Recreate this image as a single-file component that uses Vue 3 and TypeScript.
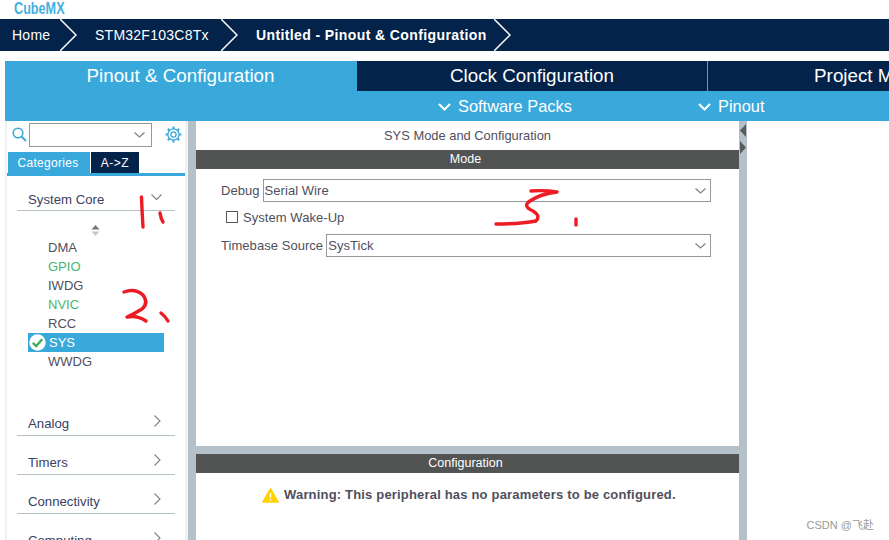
<script setup lang="ts">
const crumbs = [
  { label: 'Home', width: 61, bold: false },
  { label: 'STM32F103C8Tx', width: 161, bold: false },
  { label: 'Untitled - Pinout & Configuration', width: 273, bold: true },
]
const tabs = [
  { label: 'Pinout & Configuration', active: true },
  { label: 'Clock Configuration', active: false },
  { label: 'Project Manager', active: false },
]
const items = [
  { label: 'DMA', state: '' },
  { label: 'GPIO', state: 'green' },
  { label: 'IWDG', state: '' },
  { label: 'NVIC', state: 'green' },
  { label: 'RCC', state: '' },
  { label: 'SYS', state: 'selected' },
  { label: 'WWDG', state: '' },
]
const closed = ['Analog', 'Timers', 'Connectivity', 'Computing']
</script>

<template>
  <div class="app">
    <div class="logo"><div class="logo-text">CubeMX</div></div>

    <nav class="crumbs">
      <div v-for="c in crumbs" :key="c.label" class="crumb" :class="{ bold: c.bold }" :style="{ width: c.width + 'px' }">
        <span>{{ c.label }}</span>
        <svg class="crumb-arrow" width="17" height="32" viewBox="0 0 17 32"><path d="M0 0 L16 16 L0 32" fill="none" stroke="#fff" stroke-width="1.5" /></svg>
      </div>
    </nav>

    <div class="tabs-wrap">
      <div class="tabs">
        <div v-for="t in tabs" :key="t.label" class="tab" :class="{ active: t.active }">{{ t.label }}</div>
      </div>
      <div class="subbar">
        <div class="sub sub-soft">
          <svg width="13" height="8" viewBox="0 0 13 8"><path d="M1 1 L6.5 6.5 L12 1" fill="none" stroke="#fff" stroke-width="2" /></svg>
          <span>Software Packs</span>
        </div>
        <div class="sub sub-pin">
          <svg width="13" height="8" viewBox="0 0 13 8"><path d="M1 1 L6.5 6.5 L12 1" fill="none" stroke="#fff" stroke-width="2" /></svg>
          <span>Pinout</span>
        </div>
      </div>
    </div>

    <main class="main">
      <aside class="left">
        <div class="search">
          <svg class="mag" width="15" height="15" viewBox="0 0 15 15"><circle cx="6" cy="6" r="4.8" fill="none" stroke="#39a9dc" stroke-width="1.6" /><path d="M9.5 9.5 L14 14" stroke="#39a9dc" stroke-width="2" /></svg>
          <div class="combo">
            <svg width="11" height="6" viewBox="0 0 11 6"><path d="M0.5 0.5 L5.5 5 L10.5 0.5" fill="none" stroke="#7d8286" stroke-width="1.2" /></svg>
          </div>
          <svg class="gear" width="17" height="17" viewBox="0 0 17 17">
            <circle cx="8.5" cy="8.5" r="5.6" fill="none" stroke="#39a9dc" stroke-width="1.3" />
            <circle cx="8.5" cy="8.5" r="2.6" fill="none" stroke="#39a9dc" stroke-width="1.3" />
            <path d="M8.5 0.5V3M8.5 14V16.5M0.5 8.5H3M14 8.5H16.5M2.8 2.8L4.6 4.6M12.4 12.4L14.2 14.2M14.2 2.8L12.4 4.6M4.6 12.4L2.8 14.2" stroke="#39a9dc" stroke-width="2" />
          </svg>
        </div>
        <div class="cat-tabs">
          <div class="cat active">Categories</div>
          <div class="cat az">A-&gt;Z</div>
        </div>
        <div class="tree">
          <div class="group open">
            <span>System Core</span>
            <svg class="chev" width="11" height="6" viewBox="0 0 11 6"><path d="M0.5 0.5 L5.5 5.5 L10.5 0.5" fill="none" stroke="#7d8286" stroke-width="1.1" /></svg>
          </div>
          <div class="sorter">
            <svg width="9" height="11" viewBox="0 0 9 11"><path d="M4.5 0 L8.5 4.5 H0.5 Z" fill="#73787b" /><path d="M4.5 11 L8.5 6.5 H0.5 Z" fill="#c4c8ca" /></svg>
          </div>
          <ul class="list">
            <li v-for="i in items" :key="i.label" :class="i.state">
              <svg v-if="i.state === 'selected'" class="ok" width="17" height="17" viewBox="0 0 17 17"><circle cx="8.5" cy="8.5" r="8.2" fill="#fff" /><path d="M3.8 8.8 L7.2 12 L13.2 5.2" fill="none" stroke="#3fae5a" stroke-width="2.4" /></svg>
              <span>{{ i.label }}</span>
            </li>
          </ul>
          <div v-for="g in closed" :key="g" class="group">
            <span>{{ g }}</span>
            <svg class="chev side" width="7" height="12" viewBox="0 0 7 12"><path d="M0.5 0.5 L6 6 L0.5 11.5" fill="none" stroke="#7d8286" stroke-width="1.1" /></svg>
          </div>
        </div>
      </aside>

      <div class="split"></div>

      <section class="center">
        <div class="mode-panel">
          <div class="title">SYS Mode and Configuration</div>
          <div class="bar">Mode</div>
          <div class="form">
            <div class="field">
              <label>Debug</label>
              <div class="select">
                <span>Serial Wire</span>
                <svg width="11" height="6" viewBox="0 0 11 6"><path d="M0.5 0.5 L5.5 5 L10.5 0.5" fill="none" stroke="#7d8286" stroke-width="1.2" /></svg>
              </div>
            </div>
            <div class="check"><i class="box"></i><span>System Wake-Up</span></div>
            <div class="field">
              <label>Timebase Source</label>
              <div class="select">
                <span>SysTick</span>
                <svg width="11" height="6" viewBox="0 0 11 6"><path d="M0.5 0.5 L5.5 5 L10.5 0.5" fill="none" stroke="#7d8286" stroke-width="1.2" /></svg>
              </div>
            </div>
          </div>
        </div>
        <div class="config-panel">
          <div class="bar">Configuration</div>
          <div class="warning">
            <svg width="17" height="15" viewBox="0 0 17 15"><path d="M8.5 1 L16 14 H1 Z" fill="#ffd200" stroke="#ffd200" stroke-width="1.6" stroke-linejoin="round" /><path d="M8.5 5V9.5M8.5 11V12.6" stroke="#fff" stroke-width="1.5" /></svg>
            <strong>Warning: This peripheral has no parameters to be configured.</strong>
          </div>
        </div>
      </section>

      <div class="split arrows">
        <svg width="8" height="13" viewBox="0 0 8 13"><path d="M7 0 V13 L1 6.5 Z" fill="#5a5c5c" /></svg>
        <svg width="8" height="13" viewBox="0 0 8 13"><path d="M1 0 V13 L7 6.5 Z" fill="#5a5c5c" /></svg>
      </div>

      <div class="right"></div>
    </main>

    <svg class="ink" width="889" height="540" viewBox="0 0 889 540">
      <g fill="none" stroke="#ed1c24" stroke-width="3.4" stroke-linecap="round" stroke-linejoin="round">
        <path d="M141.5 197 Q142 212 143 227" />
        <path d="M160 213 Q161 219 163 222" />
        <path d="M124 292 Q135 288 143 295 Q149 303 142 309 Q134 314 127 317 Q137 315 146 321" />
        <path d="M161 313 Q165 316 168 321" />
        <path d="M531 191 Q545 190 557 192 Q540 194 530 201 Q522 206 533 211 Q541 216 536 221 Q520 224 496 224" />
        <path d="M576 219 V225" />
      </g>
    </svg>
    <div class="watermark">CSDN @飞赴</div>
  </div>
</template>

<style>
html, body { margin: 0; padding: 0; background: #fff; overflow: hidden; }
</style>

<style scoped>
.app {
  position: relative;
  width: 889px;
  height: 540px;
  overflow: hidden;
  background: #fff;
  font-family: "Liberation Sans", Arial, sans-serif;
  color: #4f4f5c;
}
.logo {
  height: 19px;
  padding-left: 14px;
  overflow: hidden;
}
.logo-text {
  font-size: 16px;
  font-weight: 700;
  line-height: 15px;
  color: #45afe0;
  transform: scaleX(0.79);
  transform-origin: 0 0;
  padding-top: 1px;
}
.crumbs {
  display: flex;
  height: 32px;
  background: #03234b;
  color: #fff;
  font-size: 14px;
  letter-spacing: 0.25px;
}
.crumb {
  position: relative;
  flex: none;
  box-sizing: border-box;
  line-height: 32px;
  white-space: nowrap;
}
.crumb span { display: block; }
.crumb:nth-child(1) { padding-left: 12px; }
.crumb:nth-child(2) { padding-left: 34px; }
.crumb:nth-child(3) { padding-left: 34px; }
.crumb.bold { font-weight: 700; letter-spacing: 0.39px; }
.crumb-arrow { position: absolute; right: -16px; top: 0; }
.tabs-wrap {
  margin: 10px 0 0 5px;
  height: 60px;
  background: #39a9dc;
  overflow: hidden;
}
.tabs { display: flex; height: 30px; }
.tab {
  flex: none;
  box-sizing: border-box;
  width: 350px;
  margin-right: 1px;
  text-align: center;
  font-size: 18.8px;
  line-height: 30px;
  color: #fff;
  background: #03234b;
  white-space: nowrap;
}
.tab.active { background: #39a9dc; width: 351px; }
.subbar { display: flex; height: 30px; color: #fff; font-size: 16.4px; }
.sub { display: flex; align-items: center; gap: 7px; padding-top: 1px; }
.sub-soft { margin-left: 433px; width: 260px; }
.main { display: flex; height: 419px; }
.left {
  flex: none;
  box-sizing: border-box;
  width: 183px;
  margin-left: 5px;
  border-left: 2px solid #f0f1f2;
  border-right: 3px solid #f0f1f2;
  height: 100%;
  overflow: hidden;
}
.search {
  display: flex;
  align-items: center;
  height: 24px;
  margin-top: 2px;
  margin-right: -3px;
  padding-left: 5px;
}
.mag { flex: none; margin-right: 2px; margin-top: -1px; }
.combo {
  flex: none;
  box-sizing: border-box;
  width: 123px;
  height: 24px;
  border: 1px solid #95999c;
  display: flex;
  align-items: center;
  justify-content: flex-end;
  padding-right: 6px;
}
.gear { flex: none; margin-left: 13px; margin-top: -2px; }
.cat-tabs {
  display: flex;
  gap: 1px;
  margin: 5px -3px 0 -1px;
  padding-left: 2px;
  height: 21px;
  border-bottom: 3px solid #39a9dc;
  font-size: 12px;
  letter-spacing: 0.3px;
  color: #fff;
}
.cat { line-height: 22px; text-align: center; }
.cat.active { width: 82px; box-sizing: border-box; padding-right: 2px; background: #39a9dc; }
.cat.az { width: 48px; background: #03234b; letter-spacing: 0.5px; }
.tree { padding: 0 10px; }
.group {
  position: relative;
  box-sizing: border-box;
  height: 39px;
  border-bottom: 1px solid #b5c1c8;
  padding: 19px 0 0 11px;
  font-size: 13.2px;
  line-height: 16px;
  color: #3a3f63;
}
.group.open { height: 35px; padding-top: 16px; }
.chev { position: absolute; right: 13px; top: 19px; }
.open .chev { top: 18px; }
.chev.side { right: 14px; top: 18px; }
.sorter { height: 11px; padding: 14px 0 2px 74px; }
.sorter svg { display: block; }
.list {
  list-style: none;
  margin: 0;
  padding: 0 0 0 11px;
  height: 159px;
  font-size: 13px;
}
.list li {
  box-sizing: border-box;
  width: 136px;
  height: 19px;
  line-height: 19px;
  padding-left: 20px;
  color: #4f4f5c;
  position: relative;
}
.list li.green { color: #49b572; }
.list li.selected { background: #39a9dc; color: #fff; padding-left: 21px; }
.ok { position: absolute; left: 1px; top: 1px; }
.split { flex: none; width: 8px; background: #b5c1c8; }
.split.arrows { display: flex; flex-direction: column; gap: 4px; padding-top: 3px; box-sizing: border-box; }
.split.arrows svg { display: block; }
.center {
  flex: none;
  width: 543px;
  display: flex;
  flex-direction: column;
  gap: 8px;
  background: #b5c1c8;
}
.mode-panel { height: 325px; background: #fff; flex: none; }
.config-panel { flex: 1; background: #fff; }
.title {
  height: 29px;
  text-align: center;
  font-size: 12.9px;
  line-height: 30px;
  box-sizing: border-box;
}
.bar {
  height: 19px;
  line-height: 19px;
  background: #525453;
  color: #fff;
  text-align: center;
  font-size: 12.5px;
  padding-right: 4px;
  box-sizing: border-box;
}
.form { padding: 10px 28px 0 25px; font-size: 13px; letter-spacing: 0.05px; }
.field { display: flex; align-items: center; height: 23px; gap: 3px; }
.field label { flex: none; }
.select {
  flex: 1;
  box-sizing: border-box;
  height: 23px;
  border: 1px solid #95999c;
  display: flex;
  align-items: center;
  justify-content: space-between;
  padding: 0 4px 0 1px;
}
.check { display: flex; align-items: center; box-sizing: border-box; height: 32px; padding: 0 0 2px 5px; gap: 5px; }
.box { display: block; box-sizing: border-box; width: 12px; height: 12px; border: 1px solid #53565a; }
.warning {
  display: flex;
  align-items: center;
  gap: 5px;
  padding: 14px 0 0 66px;
  font-size: 13px;
  line-height: 16px;
}
.warning strong { font-weight: 700; letter-spacing: 0.18px; }
.right { flex: 1; background: #fff; }
.ink { position: absolute; left: 0; top: 0; pointer-events: none; }
.watermark {
  position: absolute;
  right: 15px;
  bottom: 8px;
  font-size: 11px;
  line-height: 14px;
  color: #9a9a9a;
  font-family: "Liberation Sans", "Noto Sans CJK SC", sans-serif;
}
</style>
